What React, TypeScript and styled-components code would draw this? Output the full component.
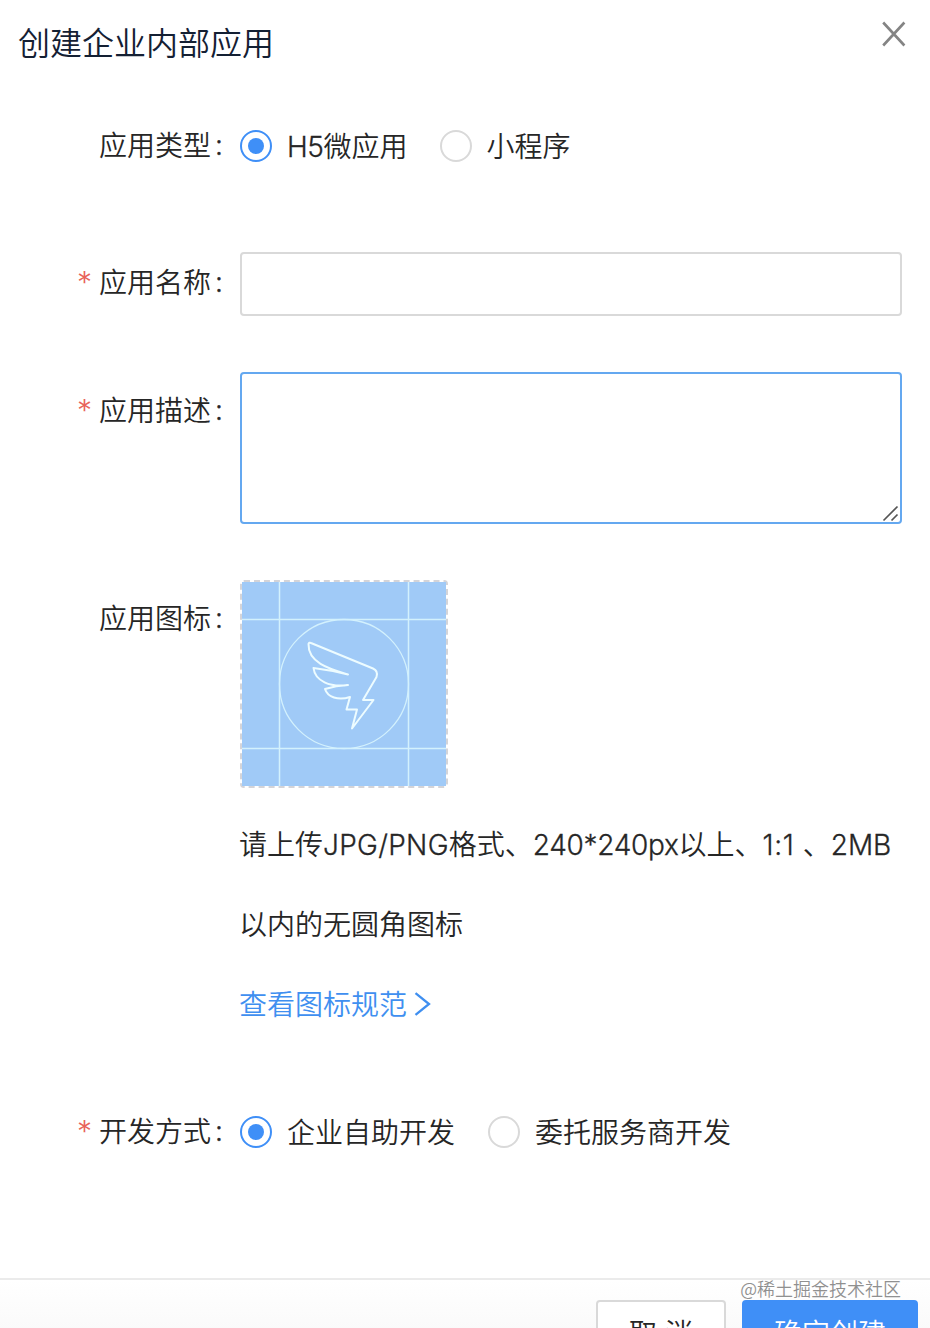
import { useState } from 'react';
import styled, { createGlobalStyle } from 'styled-components';

const App = () => {
  const [appType, setAppType] = useState('h5');
  const [devMode, setDevMode] = useState('self');

  return (
    <>
      <GlobalStyle />
      <Dialog>
        <Header>
          <Title>创建企业内部应用</Title>
          <CloseButton type='button' aria-label='Close'>
            <CloseIcon />
          </CloseButton>
        </Header>
        <Form>
          <Row $height={64} $gap={74}>
            <Label $top={13}>应用类型<Colon>:</Colon></Label>
            <RadioGroup $gap={32}>
              <RadioOption onClick={() => setAppType('h5')}>
                <Radio $checked={appType === 'h5'} />
                <OptionText><Latin $spacing={-0.4}>H5</Latin>微应用</OptionText>
              </RadioOption>
              <RadioOption onClick={() => setAppType('mini')}>
                <Radio $checked={appType === 'mini'} />
                <OptionText>小程序</OptionText>
              </RadioOption>
            </RadioGroup>
          </Row>
          <Row $height={64} $gap={56}>
            <Label $top={12}><Required>*</Required>应用名称<Colon>:</Colon></Label>
            <Input type='text' />
          </Row>
          <Row $height={152} $gap={56}>
            <Label $top={20}><Required>*</Required>应用描述<Colon>:</Colon></Label>
            <TextAreaBox>
              <TextArea />
              <ResizeGrip />
            </TextAreaBox>
          </Row>
          <Row $height={464} $gap={56}>
            <Label $top={20}>应用图标<Colon>:</Colon></Label>
            <Upload>
              <UploadBox>
                <WingIcon />
              </UploadBox>
              <Hint>
                请上传<Latin $spacing={0.3}>JPG/PNG</Latin>格式、<Latin $spacing={-0.3}>240*240px</Latin>以上、<Latin $spacing={0.6}>1:1 </Latin>、<Latin $spacing={-0.1}>2MB</Latin>
                <br />
                以内的无圆角图标
              </Hint>
              <HintLink href='#'>
                查看图标规范
                <ArrowIcon />
              </HintLink>
            </Upload>
          </Row>
          <Row $height={64} $gap={114}>
            <Label $top={13}><Required>*</Required>开发方式<Colon>:</Colon></Label>
            <RadioGroup $gap={33}>
              <RadioOption onClick={() => setDevMode('self')}>
                <Radio $checked={devMode === 'self'} />
                <OptionText>企业自助开发</OptionText>
              </RadioOption>
              <RadioOption onClick={() => setDevMode('partner')}>
                <Radio $checked={devMode === 'partner'} />
                <OptionText>委托服务商开发</OptionText>
              </RadioOption>
            </RadioGroup>
          </Row>
        </Form>
        <Footer>
          <CancelButton type='button'>取 消</CancelButton>
          <SubmitButton type='button'>确定创建</SubmitButton>
          <Watermark>@稀土掘金技术社区</Watermark>
        </Footer>
      </Dialog>
    </>
  );
};

const CloseIcon = () => (
  <svg width='24' height='26' viewBox='0 0 24 26' fill='none' stroke='#848484' strokeWidth='2.6'>
    <path d='M1.2 1.5 22.4 24.5M22.4 1.5 1.2 24.5' />
  </svg>
);

const ArrowIcon = () => (
  <svg width='18' height='28' viewBox='0 0 18 28' fill='none' stroke='#3f8ff0' strokeWidth='2.3'>
    <path d='M1.5 4.2 15 15 1.500 25.8' />
  </svg>
);

const WingIcon = () => (
  <svg width='204' height='204' viewBox='0 0 204 204' fill='none' stroke='#d3f1fd'>
    <path strokeWidth='1.5' d='M37.5 0V204M166.5 0V204M0 37.5H204M0 166.5H204' />
    <circle cx='102' cy='102' r='64.5' strokeWidth='1.3' />
    <path
      stroke='#edfcff'
      strokeWidth='2'
      strokeLinejoin='round'
      d='M69 61 131 86.5Q136.500 89 134.500 95L121 118H131.500L110 146.500L115 127.500H104.500L108 115C96 119 85.500 115 83 107Q94 103.500 106 103C88 105.500 73 99 71.500 86Q88 88 106 92.500C88 87 66 81 66.500 62Q67 60 69 61Z'
    />
  </svg>
);

const ResizeGrip = () => (
  <Grip width='18' height='18' viewBox='0 0 18 18' fill='none' stroke='#555' strokeWidth='1.7'>
    <path d='M1.5 16.5 15.5 2.5M9.5 16.5 15.5 10.5' />
  </Grip>
);

const GlobalStyle = createGlobalStyle`
    *, *::before, *::after {
        box-sizing: border-box;
    }

    body {
        margin: 0;
        background: #fff;
        color: #262626;
        font-family: 'Noto Sans CJK SC', sans-serif;
        font-size: 28px;
        font-weight: 350;
    }

    button, input, textarea {
        font: inherit;
    }
`;

const Dialog = styled.div`
    display: flex;
    flex-direction: column;
    width: 930px;
    height: 1328px;
    overflow: hidden;
    background: #fff;
`;

const Header = styled.header`
    display: flex;
    align-items: flex-start;
    justify-content: space-between;
    flex: none;
    height: 114px;
    padding: 17px 24px 0 18px;
`;

const Title = styled.h1`
    margin: 0;
    color: #142033;
    font-size: 32px;
    font-weight: 350;
    line-height: 48px;
`;

const CloseButton = styled.button`
    display: flex;
    margin-top: 4px;
    padding: 0;
    border: 0;
    background: transparent;
`;

const Form = styled.form`
    display: flex;
    flex-direction: column;
    flex: none;
`;

const Row = styled.div<{ $height: number; $gap: number }>`
    display: grid;
    grid-template-columns: 224px 662px;
    column-gap: 16px;
    height: ${({ $height }) => $height}px;
    margin-bottom: ${({ $gap }) => $gap}px;
`;

const Label = styled.label<{ $top: number }>`
    display: flex;
    justify-content: flex-end;
    height: 34px;
    margin-top: ${({ $top }) => $top}px;
    line-height: 34px;
    white-space: nowrap;
`;

const Colon = styled.span`
    width: 13px;
    padding: 1px 0 0 4px;
    font-family: Inter, sans-serif;
    font-weight: 300;
    -webkit-text-stroke: 0.4px currentColor;
`;

const Required = styled.span`
    width: 22px;
    padding-top: 1px;
    color: #e8625a;
    font-family: Inter, sans-serif;
    font-size: 30px;
    font-weight: 300;
`;

const Latin = styled.span<{ $spacing: number }>`
    font-family: Inter, sans-serif;
    letter-spacing: ${({ $spacing }) => $spacing}px;
    line-height: 1;
    white-space: pre;
    -webkit-text-stroke: 0.3px currentColor;
`;

const RadioGroup = styled.div<{ $gap: number }>`
    display: flex;
    align-items: center;
    gap: ${({ $gap }) => $gap}px;
    height: 64px;
`;

const RadioOption = styled.div`
    display: flex;
    align-items: center;
    gap: 15px;
    cursor: pointer;
`;

const Radio = styled.span<{ $checked: boolean }>`
    display: flex;
    align-items: center;
    justify-content: center;
    width: 32px;
    height: 32px;
    border: 2px solid ${({ $checked }) => ($checked ? '#3f8ff7' : '#d9d9d9')};
    border-radius: 50%;

    &::after {
        width: 16px;
        height: 16px;
        border-radius: 50%;
        background: ${({ $checked }) => ($checked ? '#3f8ff7' : 'transparent')};
        content: '';
    }
`;

const OptionText = styled.span`
    padding-bottom: 2px;
    line-height: 40px;
    white-space: nowrap;
`;

const Input = styled.input`
    width: 100%;
    height: 64px;
    padding: 0 22px;
    border: 2px solid #d9d9d9;
    border-radius: 4px;
    outline: none;
`;

const TextAreaBox = styled.div`
    position: relative;
    height: 152px;
`;

const TextArea = styled.textarea`
    display: block;
    width: 100%;
    height: 100%;
    padding: 8px 22px;
    border: 2px solid #64a8f0;
    border-radius: 4px;
    outline: none;
    resize: none;
`;

const Grip = styled.svg`
    position: absolute;
    right: 2px;
    bottom: 2px;
`;

const Upload = styled.div`
    display: flex;
    flex-direction: column;
    align-items: flex-start;
`;

const UploadBox = styled.div`
    display: flex;
    width: 208px;
    height: 208px;
    margin-bottom: 15px;
    border: 2px dashed #d4d4d8;
    border-radius: 4px;

    svg {
        background: #a0caf7;
    }
`;

const Hint = styled.p`
    margin: 0 0 0 -1px;
    line-height: 80px;
    white-space: nowrap;
`;

const HintLink = styled.a`
    display: flex;
    align-items: center;
    gap: 7px;
    margin-left: -1px;
    color: #3f8ff0;
    line-height: 80px;
    text-decoration: none;
`;

const Footer = styled.footer`
    position: relative;
    display: flex;
    justify-content: flex-end;
    gap: 16px;
    flex: none;
    height: 104px;
    padding: 20px 12px 20px 0;
    border-top: 2px solid #ebebeb;
    background: linear-gradient(#fff, #fafafa 50px);
`;

const FooterButton = styled.button`
    height: 64px;
    padding: 0;
    border-radius: 4px;
    font-size: 28px;
    line-height: 56px;
`;

const CancelButton = styled(FooterButton)`
    width: 130px;
    border: 2px solid #d9d9d9;
    background: #fff;
    color: #262626;
    word-spacing: 2px;
`;

const SubmitButton = styled(FooterButton)`
    width: 176px;
    border: 2px solid #3f8ff7;
    background: #3f8ff7;
    color: #fff;
`;

const Watermark = styled.span`
    position: absolute;
    top: -5px;
    right: 29px;
    color: #909090;
    font-size: 18px;
    line-height: 26px;
    text-shadow: 1px 1px 0 #fff;
    white-space: nowrap;
`;

export default App;
